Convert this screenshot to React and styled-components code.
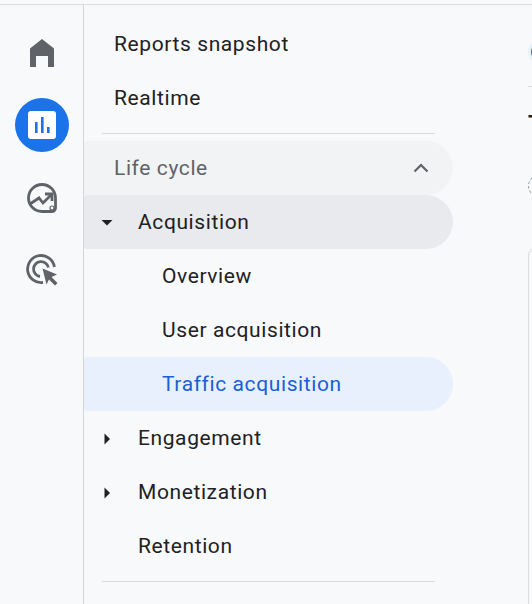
import React from "react";
import styled, { createGlobalStyle } from "styled-components";

const Global = createGlobalStyle`
  html, body { margin: 0; padding: 0; background: #f8f9fb; }
  body { font-family: "Roboto", "Liberation Sans", sans-serif; overflow: hidden; }
`;

const Page = styled.div`
  width: 532px;
  height: 604px;
  box-sizing: border-box;
  padding-top: 4px;
  overflow: hidden;
`;
const Frame = styled.div`
  height: 600px;
  display: flex;
  border-top: 1px solid #dadce0;
  box-sizing: border-box;
`;
const Rail = styled.aside`
  width: 84px;
  flex: none;
  box-sizing: border-box;
  border-right: 1px solid #d3d5d9;
  padding-top: 21px;
  display: flex;
  flex-direction: column;
  align-items: center;
`;
const RailSlot = styled.div`
  width: 54px;
  height: 54px;
  margin-bottom: 18.4px;
  margin-left: 1px;
  display: flex;
  align-items: center;
  justify-content: center;
  border-radius: 50%;
  background: ${p => (p.$active ? "#1a73e8" : "transparent")};
`;
const Nav = styled.nav`
  width: 369px;
  flex: none;
  padding-top: 12px;
`;
const Row = styled.div`
  height: 54px;
  display: flex;
  align-items: center;
  box-sizing: border-box;
  padding-left: ${p => p.$indent}px;
  font-size: 21px;
  letter-spacing: 0.6px;
  color: ${p => p.$color || "#202124"};
  background: ${p => p.$bg || "transparent"};
  border-radius: 3px 27px 27px 3px;
  position: relative;
`;
const Caret = styled.svg`
  position: absolute;
  left: 15px;
  top: 20px;
`;
const Chevron = styled.svg`
  position: absolute;
  right: 20px;
  top: 15px;
`;
const Divider = styled.hr`
  margin: 8px 18px 7px 18px;
  border: 0;
  border-top: 1px solid #d9dbde;
  height: 0;
`;
const Main = styled.main`
  flex: 1;
  min-width: 0;
  overflow: hidden;
  padding: 35px 0 0 75px;
`;
const Avatar = styled.div`
  width: 24px;
  height: 24px;
  box-sizing: border-box;
  border: 3px solid #e8f0fe;
  border-radius: 50%;
  background: #1a73e8;
`;
const MainRule = styled.div`
  width: 60px;
  height: 1px;
  margin-top: 22px;
  background: #d9dbde;
`;
const Title = styled.div`
  margin-top: 24px;
  height: 26px;
  font-size: 22px;
  line-height: 26px;
  font-weight: 700;
  color: #202124;
`;
const DashedBadge = styled.div`
  margin-top: 38px;
  width: 22px;
  height: 22px;
  box-sizing: border-box;
  border: 1px dashed #9aa0a6;
  border-radius: 50%;
`;
const Card = styled.div`
  margin-top: 49px;
  width: 200px;
  height: 400px;
  box-sizing: border-box;
  border: 1px solid #dadce0;
  border-radius: 10px;
`;

const Home = () => (
  <svg width="28" height="28" viewBox="0 0 28 28"><path d="M14 0 L26 9.5 V28 H20 V17 H8 V28 H2 V9.5 Z" fill="#5f6368" /></svg>
);
const Bars = () => (
  <svg width="28" height="28" viewBox="0 0 28 28">
    <rect x="0" y="0" width="28" height="28" rx="3" fill="#fff" />
    <rect x="7" y="11" width="2.6" height="11" fill="#1a73e8" />
    <rect x="13" y="6" width="2.6" height="16" fill="#1a73e8" />
    <rect x="19" y="16" width="2.6" height="6" fill="#1a73e8" />
  </svg>
);
const Explore = () => (
  <svg width="32" height="32" viewBox="0 0 32 32" fill="none">
    <path d="M16 2.5 A13.5 13.5 0 0 1 29.5 16 V26 A4 4 0 0 1 25.5 29.5 H16 A13.5 13.5 0 0 1 16 2.5 Z" stroke="#5f6368" strokeWidth="2.8" />
    <circle cx="26" cy="26" r="2" fill="#f8f9fb" stroke="#5f6368" strokeWidth="1.2" />
    <path d="M4 22 L13 16 L17 21 L26 12" stroke="#5f6368" strokeWidth="2.8" />
    <path d="M19 12 H26 V19" stroke="#5f6368" strokeWidth="2.8" />
  </svg>
);
const Target = () => (
  <svg width="32" height="32" viewBox="0 0 32 32" fill="none">
    <path d="M17 28.4 A13.5 13.5 0 1 1 28.4 13" stroke="#5f6368" strokeWidth="2.8" />
    <path d="M14 22.5 A7.5 7.5 0 1 1 22.4 13.5" stroke="#5f6368" strokeWidth="2.8" />
    <path d="M16.5 14.5 L31 20.5 L25.5 23 L31.5 29 L29 31.5 L23 25.5 L20.5 30.5 Z" fill="#5f6368" />
  </svg>
);

const down = <Caret width="16" height="16" viewBox="0 0 16 16"><path d="M2.5 5 H13.5 L8 10.5 Z" fill="#202124" /></Caret>;
const right = <Caret width="16" height="16" viewBox="0 0 16 16"><path d="M5.5 2.5 L11 8 L5.5 13.5 Z" fill="#202124" /></Caret>;

export default function App() {
  return (
    <Page>
      <Global />
      <Frame>
        <Rail>
          <RailSlot><Home /></RailSlot>
          <RailSlot $active><Bars /></RailSlot>
          <RailSlot><Explore /></RailSlot>
          <RailSlot><Target /></RailSlot>
        </Rail>
        <Nav>
          <Row $indent={30}>Reports snapshot</Row>
          <Row $indent={30}>Realtime</Row>
          <Divider />
          <Row $indent={30} $color="#5f6368" $bg="#f1f3f4">
            Life cycle
            <Chevron width="24" height="24" viewBox="0 0 24 24" fill="none">
              <path d="M5.5 15.5 L12 9 L18.5 15.5" stroke="#5f6368" strokeWidth="2.2" />
            </Chevron>
          </Row>
          <Row $indent={54} $bg="#e8eaed">{down}Acquisition</Row>
          <Row $indent={78}>Overview</Row>
          <Row $indent={78}>User acquisition</Row>
          <Row $indent={78} $color="#1a5fd6" $bg="#e8f0fe">Traffic acquisition</Row>
          <Row $indent={54}>{right}Engagement</Row>
          <Row $indent={54}>{right}Monetization</Row>
          <Row $indent={54}>Retention</Row>
          <Divider />
        </Nav>
        <Main>
          <Avatar />
          <MainRule />
          <Title>T</Title>
          <DashedBadge />
          <Card />
        </Main>
      </Frame>
    </Page>
  );
}
